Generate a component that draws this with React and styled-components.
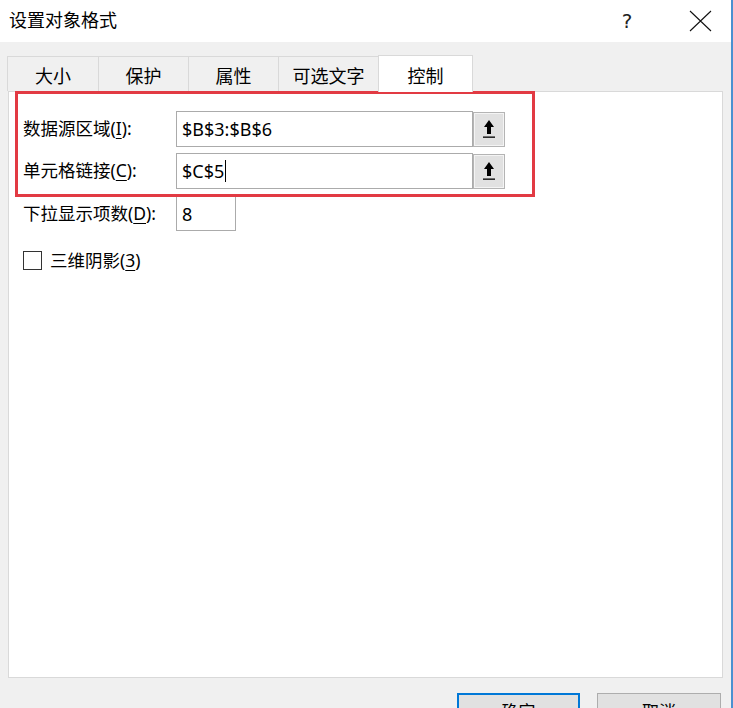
import React from "react";
import styled, { createGlobalStyle } from "styled-components";

const Global = createGlobalStyle`
  html, body {
    margin: 0;
    padding: 0;
    overflow: hidden;
    background: #f0f0f0;
  }
  * { box-sizing: border-box; }
`;

const FONT = `"Noto Sans", "Noto Sans CJK SC", sans-serif`;

const Window = styled.div`
  width: 733px;
  height: 708px;
  display: flex;
  flex-direction: column;
  background: #f0f0f0;
  border-right: 2px solid #4a90d0;
  font-family: ${FONT};
  color: #000;
  overflow: hidden;
`;

const TitleBar = styled.div`
  height: 42px;
  flex: none;
  display: flex;
  align-items: center;
  background: #fff;
  padding-left: 9px;
`;

const Title = styled.div`
  flex: 1;
  font-size: 18px;
  line-height: 1;
  margin-top: -2px;
`;

const TitleButton = styled.div`
  width: 46px;
  height: 42px;
  display: flex;
  align-items: center;
  justify-content: center;
  font-size: 20px;
  font-family: "DejaVu Sans", sans-serif;
  color: #222;
  margin-right: ${(p) => p.$mr || 0}px;
`;

const Body = styled.div`
  flex: 1;
  display: flex;
  flex-direction: column;
  padding: 13px 8px 0 8px;
`;

const TabStrip = styled.div`
  display: flex;
  align-items: flex-end;
  height: 36px;
`;

const Tab = styled.div`
  width: ${(p) => p.$w}px;
  height: ${(p) => (p.$active ? 37 : 35)}px;
  display: flex;
  align-items: center;
  justify-content: center;
  font-size: 18px;
  background: ${(p) => (p.$active ? "#fff" : "#f0f0f0")};
  border: 1px solid #d9d9d9;
  border-bottom: none;
  margin-left: -1px;
  margin-bottom: ${(p) => (p.$active ? -1 : 0)}px;
  position: relative;
  z-index: ${(p) => (p.$active ? 2 : 1)};
  padding-top: 2px;
`;

const Panel = styled.div`
  height: 587px;
  background: #fff;
  border: 1px solid #d9d9d9;
  padding: 19px 0 0 14px;
  position: relative;
`;

const Form = styled.div`
  display: flex;
  flex-direction: column;
`;

const Row = styled.div`
  display: flex;
  align-items: center;
  height: ${(p) => p.$h || 36}px;
  margin-bottom: ${(p) => p.$mb || 0}px;
`;

const Label = styled.div`
  width: 153px;
  font-size: 17.5px;
  line-height: 1;
  white-space: nowrap;
`;

const Key = styled.span`
  text-decoration: underline;
  text-underline-offset: 3px;
`;

const Input = styled.div`
  width: ${(p) => p.$w}px;
  height: 100%;
  border: 1px solid #ababab;
  background: #fff;
  font-size: 18px;
  padding: 0 0 0 5px;
  display: flex;
  align-items: center;
  line-height: 1;
`;

const Caret = styled.span`
  display: inline-block;
  width: 1px;
  height: 22px;
  background: #000;
  margin-left: 1px;
`;

const PickButton = styled.div`
  width: 32px;
  height: 35px;
  background: #e1e1e1;
  border: 1px solid #b4b4b4;
  display: flex;
  align-items: center;
  justify-content: center;
  box-shadow: inset 0 0 0 1px #f4f4f4;
`;

const Highlight = styled.div`
  position: absolute;
  left: 6px;
  top: -1px;
  width: 520px;
  height: 106px;
  border: 3px solid #e23a43;
  pointer-events: none;
`;

const CheckRow = styled.label`
  display: flex;
  align-items: center;
  margin-top: 20px;
  font-size: 17.5px;
  line-height: 1;
`;

const Box = styled.span`
  width: 19px;
  height: 19px;
  border: 1px solid #333;
  background: #fff;
  margin-right: 8px;
`;

const Footer = styled.div`
  display: flex;
  justify-content: flex-end;
  gap: 17px;
  padding: 15px 2px 0 0;
`;

const DialogButton = styled.div`
  width: ${(p) => p.$w}px;
  height: 34px;
  background: #e1e1e1;
  border: ${(p) => (p.$primary ? "2px solid #0078d7" : "1px solid #adadad")};
  display: flex;
  align-items: center;
  justify-content: center;
  font-size: 17px;
`;

const UpArrow = () => (
  <svg width="14" height="20" viewBox="0 0 14 20">
    <path d="M7 1 L12 8 H9 V15 H5 V8 H2 Z" fill="#000" />
    <rect x="1" y="17.5" width="12" height="1.3" fill="#000" />
  </svg>
);

const CloseIcon = () => (
  <svg width="23" height="22" viewBox="0 0 23 22">
    <path d="M1 1 L22 21 M22 1 L1 21" stroke="#111" strokeWidth="1.1" />
  </svg>
);

const TABS = [
  { name: "大小", w: 92 },
  { name: "保护", w: 91 },
  { name: "属性", w: 91 },
  { name: "可选文字", w: 101 },
  { name: "控制", w: 95, active: true },
];

export default function App() {
  return (
    <>
      <Global />
      <Window>
        <TitleBar>
          <Title>设置对象格式</Title>
          <TitleButton $mr={27}>?</TitleButton>
          <TitleButton $mr={8}>
            <CloseIcon />
          </TitleButton>
        </TitleBar>
        <Body>
          <TabStrip>
            {TABS.map((t) => (
              <Tab key={t.name} $w={t.w} $active={t.active}>
                {t.name}
              </Tab>
            ))}
          </TabStrip>
          <Panel>
            <Form>
              <Row $mb={6}>
                <Label>
                  数据源区域(<Key>I</Key>):
                </Label>
                <Input $w={297}>$B$3:$B$6</Input>
                <PickButton>
                  <UpArrow />
                </PickButton>
              </Row>
              <Row $mb={7}>
                <Label>
                  单元格链接(<Key>C</Key>):
                </Label>
                <Input $w={297}>
                  $C$5
                  <Caret />
                </Input>
                <PickButton>
                  <UpArrow />
                </PickButton>
              </Row>
              <Row $h={35}>
                <Label>
                  下拉显示项数(<Key>D</Key>):
                </Label>
                <Input $w={60}>8</Input>
              </Row>
              <CheckRow>
                <Box />
                三维阴影(<Key>3</Key>)
              </CheckRow>
            </Form>
            <Highlight />
          </Panel>
          <Footer>
            <DialogButton $primary $w={123}>确定</DialogButton>
            <DialogButton $w={124}>取消</DialogButton>
          </Footer>
        </Body>
      </Window>
    </>
  );
}
